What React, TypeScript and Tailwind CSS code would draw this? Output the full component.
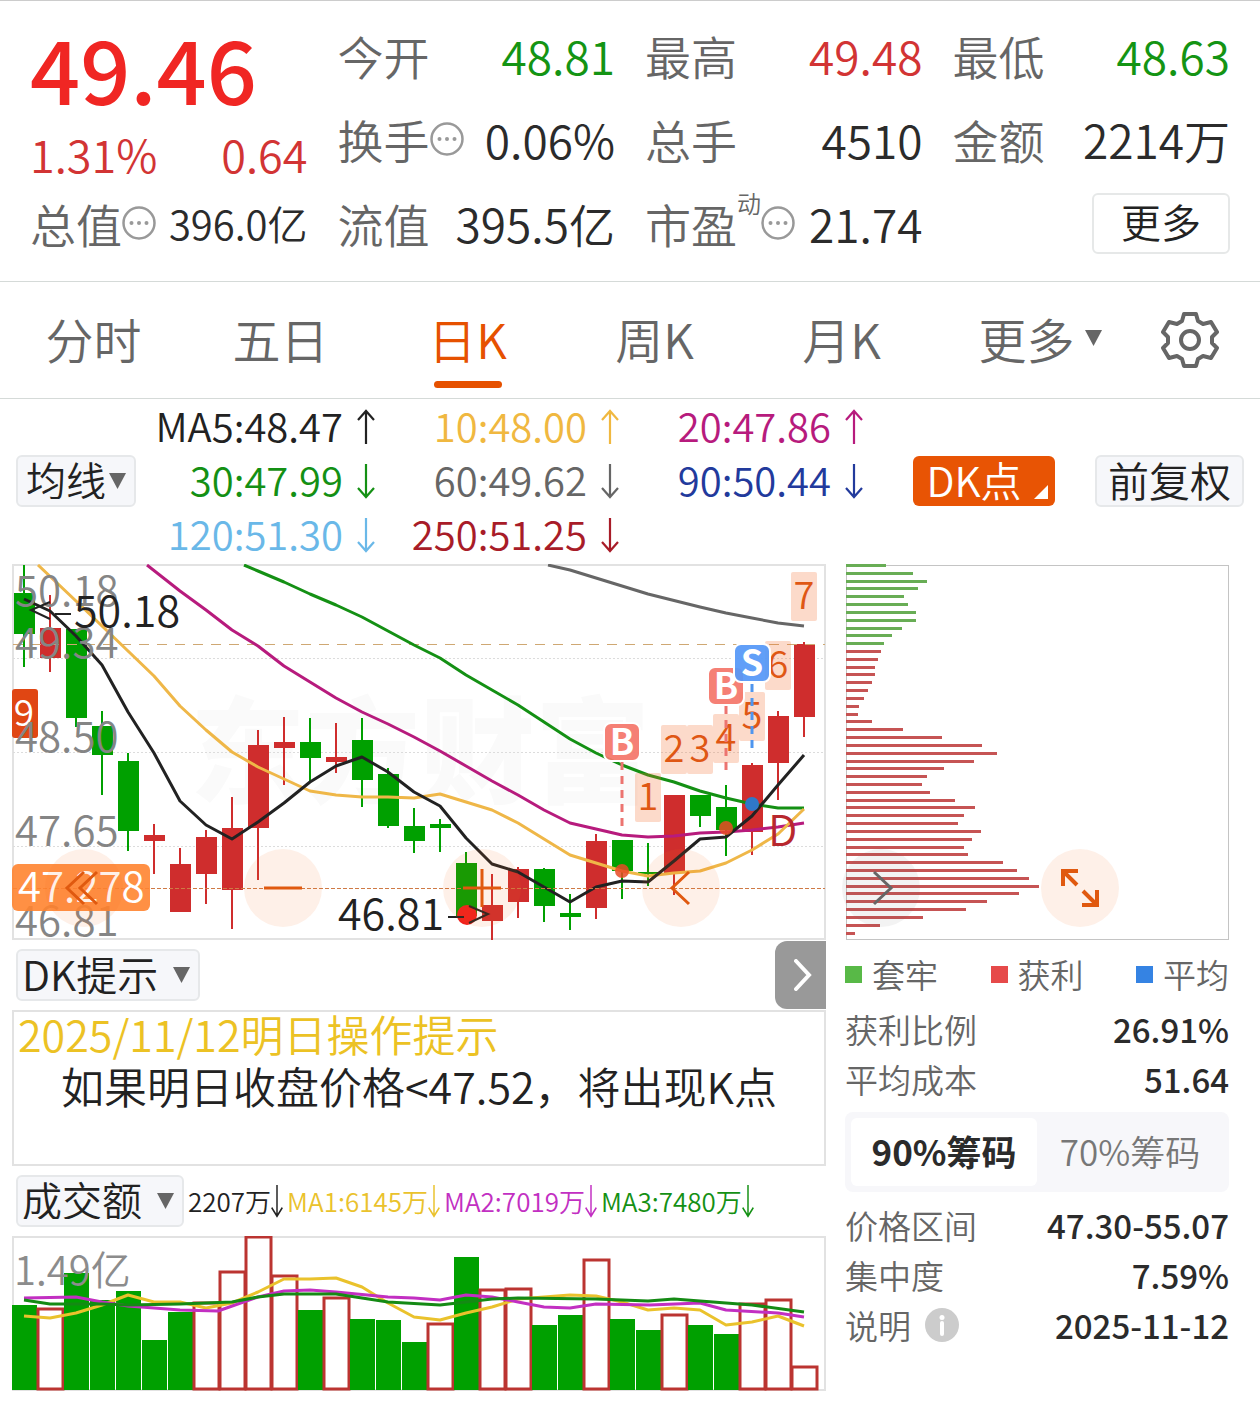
import type { ReactNode } from "react";

const UP = "#cf2d2d";
const DOWN = "#00a000";

type Candle = [color: "r" | "g", top: number, bottom: number, high: number, low: number];

const candles: Candle[] = [
  ["g", 594, 635, 566, 668],
  ["r", 629, 659, 596, 673],
  ["g", 630, 719, 630, 728],
  ["g", 727, 756, 712, 796],
  ["g", 762, 832, 754, 852],
  ["r", 836, 842, 825, 875],
  ["r", 865, 913, 849, 913],
  ["r", 838, 875, 831, 905],
  ["r", 829, 891, 798, 930],
  ["r", 746, 829, 731, 881],
  ["r", 743, 749, 718, 786],
  ["g", 743, 759, 719, 782],
  ["r", 758, 763, 724, 774],
  ["g", 741, 781, 719, 808],
  ["g", 775, 827, 769, 829],
  ["g", 827, 842, 809, 854],
  ["g", 825, 829, 820, 853],
  ["g", 864, 917, 853, 917],
  ["r", 906, 922, 875, 941],
  ["r", 870, 903, 868, 919],
  ["g", 870, 907, 869, 923],
  ["g", 914, 918, 895, 931],
  ["r", 842, 909, 835, 920],
  ["g", 841, 872, 841, 900],
  ["g", 873, 875, 844, 887],
  ["r", 796, 874, 796, 896],
  ["g", 796, 817, 796, 828],
  ["g", 808, 831, 786, 857],
  ["r", 766, 833, 764, 856],
  ["r", 717, 764, 712, 801],
  ["r", 645, 718, 643, 738],
];

const volumes: ["r" | "g", number][] = [
  ["g", 1306], ["r", 1310], ["g", 1274], ["g", 1301], ["g", 1292], ["g", 1341], ["g", 1313], ["r", 1304],
  ["r", 1273], ["r", 1238], ["r", 1277], ["g", 1311], ["r", 1299], ["g", 1320], ["g", 1321], ["g", 1343],
  ["r", 1325], ["g", 1258], ["r", 1291], ["r", 1290], ["g", 1326], ["g", 1316], ["r", 1261], ["g", 1320],
  ["g", 1331], ["r", 1316], ["g", 1326], ["g", 1335], ["r", 1305], ["r", 1301], ["r", 1368],
];

const chips = [
  40, 67, 81, 72, 58, 62, 70, 70, 56, 46, 38, 35, 32, 29, 29, 26, 22, 18, 13, 12, 26, 57, 96, 136, 151, 128, 98, 81,
  76, 84, 109, 129, 118, 112, 135, 126, 118, 122, 157, 171, 183, 193, 173, 141, 120, 77, 34, 9,
];

const marks: [string, number, number][] = [
  ["1", 648, 774],
  ["2", 674, 726],
  ["3", 700, 726],
  ["4", 726, 715],
  ["5", 752, 693],
  ["6", 778, 642],
  ["7", 804, 573],
];

const axis: [string, number][] = [
  ["50.18", 607],
  ["49.34", 659],
  ["48.50", 753],
  ["47.65", 847],
  ["46.81", 937],
];

function Badge({ letter, x, y, color }: { letter: string; x: number; y: number; color: string }) {
  return (
    <g>
      <rect x={x - 18} y={y} width={36} height={38} rx={7} fill={color} fillOpacity={0.93} stroke="#fff" strokeWidth={2} />
      <text x={x} y={y + 32} textAnchor="middle" fontSize={36} fontWeight={700} fill="#fff">
        {letter}
      </text>
    </g>
  );
}

function CandleChart() {
  return (
    <svg viewBox="12 565 814 376" className="block w-full" role="img" aria-label="日K线图">
      <text x={190} y={795} fontSize={115} fontWeight={900} fill="#fafafa">
        东方财富
      </text>
      <rect x={13} y={566} width={812} height={374} fill="none" stroke="#e2e2e2" strokeWidth={2} />
      {[659, 753, 847].map((y) => (
        <line key={y} x1={13} x2={825} y1={y} y2={y} stroke="#dcdcdc" strokeDasharray="2 2" shapeRendering="crispEdges" />
      ))}
      {candles.map(([c, top, bottom, high, low], i) => {
        const x = 24 + i * 26;
        const color = c === "r" ? UP : DOWN;
        return (
          <g key={i} fill={color}>
            <rect x={x - 1} y={high} width={2} height={low - high} />
            <rect x={x - 10} y={top} width={21} height={bottom - top} />
          </g>
        );
      })}
      <line x1={13} x2={825} y1={645} y2={645} stroke="#cfa873" strokeDasharray="10 8" shapeRendering="crispEdges" />
      <g fill="none" strokeWidth={3} strokeLinejoin="round">
        <polyline stroke="#666" points="548,566 570,571 622,587 648,595 700,608 726,614 752,619 778,624 804,627" />
        <polyline
          stroke="#149014"
          points="244,566 258,572 284,583 310,595 336,606 362,618 388,632 414,646 440,659 466,676 492,691 518,706 544,723 570,740 596,754 622,766 648,776 674,783 700,792 726,799 752,805 778,809 804,809"
        />
        <polyline
          stroke="#b71b7d"
          points="147,566 180,592 206,611 232,631 258,647 284,667 310,683 336,699 362,713 388,725 414,738 440,752 466,767 492,782 518,796 544,811 570,824 596,830 622,836 648,838 674,837 700,834 726,833 752,831 778,828 804,824"
        />
        <polyline
          stroke="#efb748"
          points="38,566 76,602 102,627 128,652 154,677 180,707 206,731 232,753 258,768 284,780 310,792 336,796 362,798 388,798 414,799 440,795 466,803 492,811 518,824 544,840 570,856 596,864 622,872 648,877 674,874 700,872 726,864 752,851 778,835 804,810"
        />
        <polyline
          stroke="#222"
          points="24,600 50,612 76,637 102,666 128,713 154,754 180,802 206,826 232,840 258,823 284,804 310,783 336,767 362,758 388,773 414,793 440,807 466,839 492,865 518,873 544,888 570,903 596,888 622,882 648,883 674,862 700,840 726,838 752,817 778,786 804,756"
        />
      </g>
      <rect x={12} y={690} width={26} height={49} rx={3} fill="#e04613" />
      <text x={24} y={727} fontSize={37} textAnchor="middle" fill="#fff">
        9
      </text>
      <g fill="#858585" fontSize={42}>
        {axis.map(([label, y]) => (
          <text key={label} x={15} y={y}>
            {label}
          </text>
        ))}
      </g>
      <line x1={13} x2={825} y1={889} y2={889} stroke="#cf7a45" strokeDasharray="4 2" shapeRendering="crispEdges" />
      <rect x={12} y={865} width={138} height={47} rx={6} fill="#ff8430" fillOpacity={0.9} />
      <text x={18} y={903} fontSize={42} fill="#fff">
        47.278
      </text>
      <g stroke="#222" strokeWidth={2} fill="none">
        <path d="M50 603 31 611 50 620M55 615H71" />
      </g>
      <text x={74} y={628} fontSize={43} fill="#222">
        50.18
      </text>
      <circle cx={467} cy={916} r={10} fill="#f0201c" />
      <g stroke="#222" strokeWidth={2} fill="none">
        <path d="M469 907 488 915 469 924M448 918H464" />
      </g>
      <text x={338} y={931} fontSize={43} fill="#222">
        46.81
      </text>
      {marks.map(([n, x, y]) => (
        <g key={n}>
          <rect x={x - 13} y={y} width={26} height={49} rx={2} fill="#f26a2a" fillOpacity={0.25} />
          <text x={x} y={y + 37} fontSize={38} textAnchor="middle" fill="#df5714">
            {n}
          </text>
        </g>
      ))}
      <g strokeWidth={3} strokeDasharray="8 6">
        <line x1={622} x2={622} y1={763} y2={827} stroke="#ec7470" />
        <line x1={726} x2={726} y1={707} y2={771} stroke="#ec7470" />
        <line x1={752} x2={752} y1={685} y2={750} stroke="#4f95ee" />
      </g>
      <Badge letter="B" x={622} y={724} color="#f4766a" />
      <Badge letter="B" x={726} y={668} color="#f4766a" />
      <Badge letter="S" x={752} y={645} color="#5598f8" />
      <circle cx={622} cy={872} r={7} fill="#e84a26" fillOpacity={0.85} />
      <circle cx={726} cy={829} r={7} fill="#e84a26" fillOpacity={0.85} />
      <circle cx={752} cy={805} r={7} fill="#2f78c8" />
      <text x={768} y={847} fontSize={43} fill="#b8282e">
        D
      </text>
    </svg>
  );
}

function VolumeChart() {
  return (
    <svg viewBox="12 1237 814 155" className="block w-full" role="img" aria-label="成交额">
      <rect x={13} y={1238} width={812} height={153} fill="none" stroke="#e2e2e2" strokeWidth={2} />
      {volumes.map(([c, y], i) =>
        c === "g" ? (
          <rect key={i} x={12 + i * 26} y={y} width={25} height={1391 - y} fill={DOWN} />
        ) : (
          <rect key={i} x={12 + i * 26} y={y} width={25} height={1390 - y} fill="#fff" stroke="#bb3431" strokeWidth={3} />
        ),
      )}
      <g fill="none" strokeWidth={3} strokeLinejoin="round">
        <polyline
          stroke="#eac22c"
          points="24,1317 50,1319 76,1314 102,1306 128,1296 154,1303 180,1303 206,1309 232,1304 258,1293 284,1280 310,1280 336,1279 362,1288 388,1304 414,1318 440,1321 466,1314 492,1308 518,1300 544,1298 570,1296 596,1297 622,1303 648,1311 674,1309 700,1311 726,1326 752,1323 778,1317 804,1327"
        />
        <polyline
          stroke="#c22fc2"
          points="24,1299 76,1298 102,1303 128,1307 154,1309 180,1311 218,1312 258,1298 284,1292 310,1291 336,1293 388,1298 414,1299 440,1301 466,1296 492,1298 518,1303 544,1308 570,1309 596,1305 650,1306 700,1304 726,1311 778,1314 804,1318"
        />
        <polyline
          stroke="#148a14"
          points="24,1301 50,1305 102,1305 128,1306 180,1305 232,1303 258,1298 284,1295 336,1295 362,1299 388,1303 440,1306 466,1303 492,1300 518,1299 596,1300 648,1302 674,1300 726,1304 752,1306 804,1313"
        />
      </g>
      <text x={14} y={1286} fontSize={40} fill="#8c8c8c">
        1.49亿
      </text>
    </svg>
  );
}

function ChipChart() {
  return (
    <svg viewBox="845 565 384 376" className="block w-full" role="img" aria-label="筹码分布">
      <rect x={846} y={566} width={382} height={374} fill="none" stroke="#c4c4c4" shapeRendering="crispEdges" />
      {chips.map((w, i) => (
        <rect key={i} x={846} y={565 + Math.round(i * 7.82)} width={w} height={3} fill={i < 11 ? "#68ad55" : "#c65454"} />
      ))}
    </svg>
  );
}

function DotsIcon() {
  return (
    <svg viewBox="0 0 34 34" className="size-[34px] shrink-0" aria-hidden="true">
      <circle cx="17" cy="17" r="15.5" fill="none" stroke="#999" strokeWidth="2.5" />
      <circle cx="9.500" cy="17" r="2" fill="#999" />
      <circle cx="17" cy="17" r="2" fill="#999" />
      <circle cx="24.500" cy="17" r="2" fill="#999" />
    </svg>
  );
}

function Triangle() {
  return (
    <svg viewBox="0 0 17 16" className="h-4 w-[17px] shrink-0" aria-hidden="true">
      <path d="M0 0H17L8.500 16Z" fill="#666" />
    </svg>
  );
}

function Trend({ up, small }: { up?: boolean; small?: boolean }) {
  return (
    <svg
      viewBox="0 0 18 36"
      className={small ? "h-[34px] w-3 shrink-0" : "h-9 w-[18px] shrink-0"}
      preserveAspectRatio="none"
      aria-label={up ? "升" : "降"}
    >
      <path d={up ? "M9 35V2M1 11 9 2 17 11" : "M9 1V34M1 25 9 34 17 25"} fill="none" stroke="currentColor" strokeWidth="2.2" />
    </svg>
  );
}

function Stat({ label, value, tone, extra, size }: { label: string; value: string; tone?: string; extra?: ReactNode; size?: string }) {
  return (
    <div className="flex h-[84px] items-center justify-between whitespace-nowrap">
      <dt className="flex items-center text-[46px] text-[#666]">
        {label}
        {extra}
      </dt>
      <dd className={`${size ?? "text-[46px]"} ${tone ?? "text-[#2b2b2b]"}`}>{value}</dd>
    </div>
  );
}

function Picker({ label, options, className }: { label: string; options: string[]; className: string }) {
  return (
    <label className={`relative flex shrink-0 items-center rounded-md border-2 border-[#e6e8ea] bg-[#f6f7fa] ${className}`}>
      <select aria-label={label} className="h-full w-full appearance-none bg-transparent pb-1 pl-1 text-[#222] outline-none">
        {options.map((o) => (
          <option key={o}>{o}</option>
        ))}
      </select>
      <span className="pointer-events-none absolute right-2">
        <Triangle />
      </span>
    </label>
  );
}

function Round({ label, gray, children }: { label: string; gray?: boolean; children: ReactNode }) {
  return (
    <button
      aria-label={label}
      className={`flex size-[78px] shrink-0 items-center justify-center rounded-full ${gray ? "bg-[#666]/8 text-[#666]" : "bg-[#f26a1b]/10 text-[#e0590f]"}`}
    >
      <svg viewBox="0 0 40 40" className="size-10" fill="none" stroke="currentColor" strokeWidth="3" aria-hidden="true">
        {children}
      </svg>
    </button>
  );
}

function Average({ color, up, children }: { color: string; up?: boolean; children: ReactNode }) {
  return (
    <span className={`flex h-[54px] items-center justify-end gap-3.5 ${color}`}>
      <span className="pb-1">{children}</span>
      <Trend up={up} />
    </span>
  );
}

function Detail({ label, value, extra }: { label: string; value: string; extra?: ReactNode }) {
  return (
    <div className="flex h-[50px] items-center justify-between whitespace-nowrap">
      <dt className="flex items-center gap-3.5 text-[#666]">
        {label}
        {extra}
      </dt>
      <dd className="font-medium text-[#2b2b2b]">{value}</dd>
    </div>
  );
}

export default function App() {
  return (
    <main className="w-full bg-white pb-2.5 font-['Noto_Sans_CJK_SC',sans-serif] leading-none font-[350]">
      <header className="border-y border-t-[#ccc] border-b-[#d5dad8] px-[30px] pt-3 pb-4">
        <dl className="grid grid-cols-4 gap-x-[30px]">
          <div className="row-span-2 flex flex-col" aria-label="现价">
            <dd className="mt-2.5 text-[88px] font-medium text-[#f02623]">49.46</dd>
            <dd className="mt-5 flex justify-between text-[45px] text-[#d23434]">
              <span>1.31%</span>
              <span>0.64</span>
            </dd>
          </div>
          <Stat label="今开" value="48.81" tone="text-[#149414]" />
          <Stat label="最高" value="49.48" tone="text-[#d23434]" />
          <Stat label="最低" value="48.63" tone="text-[#149414]" />
          <Stat label="换手" value="0.06%" extra={<DotsIcon />} />
          <Stat label="总手" value="4510" />
          <Stat label="金额" value="2214万" />
          <Stat label="总值" value="396.0亿" extra={<DotsIcon />} size="text-[40px]" />
          <Stat label="流值" value="395.5亿" />
          <Stat
            label="市盈"
            value="21.74"
            extra={
              <>
                <span className="mb-10 text-[24px]">动</span>
                <DotsIcon />
              </>
            }
          />
          <div className="flex h-[84px] items-center justify-end">
            <button className="h-[61px] w-[138px] rounded-md border-2 border-[#e6e8e8] pb-1 text-[40px] text-[#222]">更多</button>
          </div>
        </dl>
      </header>

      <nav className="grid grid-cols-[187fr_187fr_187fr_187fr_187fr_210fr_90fr] border-b border-[#d5dad8] pr-[25px] text-[48px] text-[#666]">
        {["分时", "五日", "日K", "周K", "月K"].map((t) => (
          <button key={t} aria-current={t === "日K"} className={`relative h-[116px] pb-1 ${t === "日K" ? "text-[#e65100]" : ""}`}>
            {t}
            {t === "日K" && <span className="absolute bottom-2.5 left-1/2 h-[7px] w-[68px] -translate-x-1/2 rounded-full bg-[#e65100]" />}
          </button>
        ))}
        <button className="flex items-center justify-center gap-2.5 pb-1">
          更多
          <Triangle />
        </button>
        <button aria-label="设置" className="flex items-center justify-center">
          <svg viewBox="0 0 58 58" className="size-[58px]" fill="none" stroke="#666" strokeWidth="4" strokeLinejoin="round" aria-hidden="true">
            <path d="M23 3H35L37 10 42 13 50 11 56 21 51 26V32L56 37 50 47 42 45 37 48 35 55H23L21 48 16 45 8 47 2 37 7 32V26L2 21 8 11 16 13 21 10Z" />
            <circle cx="29" cy="29" r="9" />
          </svg>
        </button>
      </nav>

      <section className="flex items-center px-4 pt-px pb-0.5" aria-label="均线">
        <Picker label="指标" options={["均线"]} className="h-[52px] w-[120px] pl-1 text-[40px]" />
        <div className="grid flex-1 grid-cols-[239fr_244fr_244fr] text-[40px] whitespace-nowrap">
          <Average color="text-[#222]" up>MA5:48.47</Average>
          <Average color="text-[#f0b840]" up>10:48.00</Average>
          <Average color="text-[#b71b7d]" up>20:47.86</Average>
          <Average color="text-[#149014]">30:47.99</Average>
          <Average color="text-[#666]">60:49.62</Average>
          <Average color="text-[#223a9c]">90:50.44</Average>
          <Average color="text-[#6ab8e8]">120:51.30</Average>
          <Average color="text-[#a81c28]">250:51.25</Average>
        </div>
        <button className="relative ml-[50px] h-[50px] w-[142px] shrink-0 rounded-md bg-[#e85404] pr-5 pb-1 text-[41px] text-white">
          DK点
          <svg viewBox="0 0 14 14" className="absolute right-[7px] bottom-[7px] size-3.5" aria-hidden="true">
            <path d="M14 0V14H0Z" fill="#fff" />
          </svg>
        </button>
        <button className="ml-10 h-[52px] w-[149px] shrink-0 rounded-md border-2 border-[#e6e8ea] bg-[#f6f7fa] pb-1 text-[41px] text-[#222]">
          前复权
        </button>
      </section>

      <div className="grid grid-cols-[814fr_384fr] gap-x-[19px] pr-[31px] pl-3">
        <section>
          <div className="relative">
            <CandleChart />
            <div className="absolute bottom-[13px] left-[33px] flex gap-[121px]">
              <Round label="最左">
                <path d="M20 4 3 20 20 36M33 4 16 20 33 36" />
              </Round>
              <Round label="缩小">
                <path d="M1 20H39" />
              </Round>
              <Round label="放大">
                <path d="M1 20H39M20 1V39" />
              </Round>
              <Round label="左移">
                <path d="M28 4 11 20 28 36" />
              </Round>
            </div>
          </div>

          <div className="flex h-[70px] items-center justify-between pl-1">
            <Picker label="副图" options={["DK提示"]} className="h-[52px] w-[184px] text-[41px]" />
            <button aria-label="展开" className="flex h-[68px] w-[51px] items-center justify-center rounded-l-xl bg-[#999] pl-1">
              <svg viewBox="0 0 18 32" className="h-8 w-[18px]" fill="none" stroke="#fff" strokeWidth="4" strokeLinecap="round" aria-hidden="true">
                <path d="M2 2 15 16 2 30" />
              </svg>
            </button>
          </div>

          <div className="flex h-[156px] flex-col gap-2.5 border-2 border-[#e2e2e2] px-1 text-[43px] leading-[42px] whitespace-nowrap">
            <p className="text-[#ecc224]">2025/11/12明日操作提示</p>
            <p className="pl-[43px] text-[#222]">如果明日收盘价格&lt;47.52，将出现K点</p>
          </div>

          <div className="flex h-[70px] items-center gap-1 pl-1 text-[26px] whitespace-nowrap">
            <Picker label="量能" options={["成交额"]} className="h-[52px] w-[168px] text-[40px]" />
            <span className="flex items-center text-[#222]">2207万<Trend small /></span>
            <span className="flex items-center text-[#eac22c]">MA1:6145万<Trend small /></span>
            <span className="flex items-center text-[#c22fc2]">MA2:7019万<Trend small /></span>
            <span className="flex items-center text-[#149014]">MA3:7480万<Trend small /></span>
          </div>
          <VolumeChart />
        </section>

        <aside className="text-[33px]">
          <div className="relative">
            <ChipChart />
            <div className="absolute bottom-[13px] -left-[3px] flex gap-[121px]">
              <Round label="右移" gray>
                <path d="M13 4 30 20 13 36" />
              </Round>
              <Round label="全屏">
                <path d="M18 3H3V18M3 3 17 17M22 37H37V22M37 37 23 23" strokeWidth="4" />
              </Round>
            </div>
          </div>
          <ul className="flex h-16 items-center justify-between pt-1 text-[#666]">
            {[
              ["套牢", "bg-[#58b947]"],
              ["获利", "bg-[#e64a4a]"],
              ["平均", "bg-[#3583e3]"],
            ].map(([t, c]) => (
              <li key={t} className="flex items-center gap-2.5">
                <span className={`size-[17px] ${c}`} />
                {t}
              </li>
            ))}
          </ul>
          <dl>
            <Detail label="获利比例" value="26.91%" />
            <Detail label="平均成本" value="51.64" />
          </dl>
          <div className="my-2 grid h-20 grid-cols-2 rounded-lg bg-[#f7f7fa] p-1.5 text-[35px]">
            <button aria-pressed="true" className="rounded-md bg-white pb-1 font-bold text-[#2b2b2b]">90%筹码</button>
            <button aria-pressed="false" className="pb-1 text-[#777]">70%筹码</button>
          </div>
          <dl>
            <Detail label="价格区间" value="47.30-55.07" />
            <Detail label="集中度" value="7.59%" />
            <Detail
              label="说明"
              value="2025-11-12"
              extra={
                <svg viewBox="0 0 34 34" className="size-[34px]" aria-hidden="true">
                  <circle cx="17" cy="17" r="17" fill="#ccc" />
                  <circle cx="17" cy="9.500" r="2.500" fill="#fff" />
                  <path d="M17 15V26" stroke="#fff" strokeWidth="4" strokeLinecap="round" />
                </svg>
              }
            />
          </dl>
        </aside>
      </div>
    </main>
  );
}
